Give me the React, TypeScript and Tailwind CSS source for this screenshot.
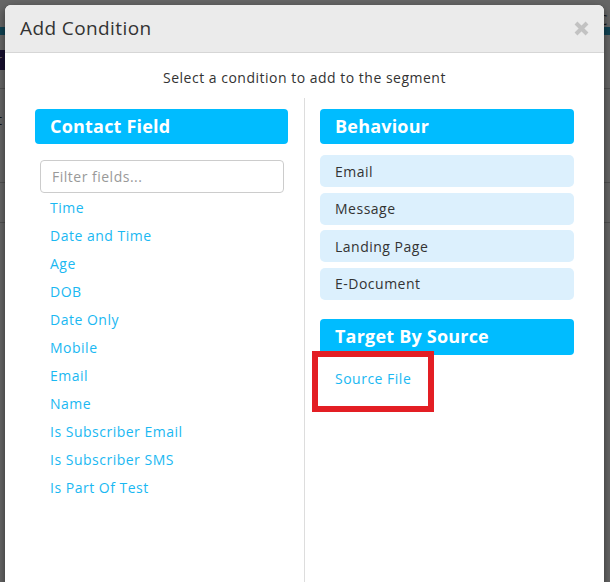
import { useState } from 'react';

const contactFields = [
  'Time',
  'Date and Time',
  'Age',
  'DOB',
  'Date Only',
  'Mobile',
  'Email',
  'Name',
  'Is Subscriber Email',
  'Is Subscriber SMS',
  'Is Part Of Test',
];

const behaviours = ['Email', 'Message', 'Landing Page', 'E-Document'];

function SectionHeader({ title, tall }: { title: string; tall?: boolean }) {
  return (
    <div
      className={`flex ${tall ? 'h-[36px]' : 'h-[35px]'} items-center rounded-[4px] bg-[#00bcff] pl-[15px] text-[18px] font-bold tracking-[0.2px] text-white`}
    >
      {title}
    </div>
  );
}

export default function App() {
  const [filter, setFilter] = useState('');
  const shown = contactFields.filter((f) => f.toLowerCase().includes(filter.toLowerCase()));

  return (
    <div className="relative h-[582px] w-[610px] overflow-hidden bg-white font-['Open_Sans',sans-serif]">
      {/* page behind the modal */}
      <div className="flex h-[27px] items-end justify-end gap-[40px] pr-[2px] text-[15px] leading-[22px] text-[#333]">
        <span className="-mb-[3px]">Home</span>
        <span className="-mb-[3px]">Journeys</span>
        <span className="-mb-[3px] w-[10px] overflow-hidden">C</span>
      </div>
      <div className="h-[8px] bg-[#2aa7cf]" />
      <div className="mt-[15px] flex h-[20px] w-[40px] items-center bg-[#3d2a78] text-[12px] text-white">
        <span className="-ml-[3px]">r</span>
      </div>
      <div className="mt-[18px] border-b border-[#ccc]" />
      <div className="mt-[20px] text-[14px] text-[#333]">
        <span className="-ml-[3px]">t</span>
      </div>
      <div className="mt-[52px] border-b border-[#ccc]" />
      <div className="mt-[39px] border-b border-[#ccc]" />

      {/* overlay */}
      <div className="absolute inset-0 bg-black/60" />

      {/* modal */}
      <div className="absolute left-[5px] top-[5px] h-[620px] w-[599px] overflow-hidden rounded-t-[6px] bg-white shadow-[0_3px_9px_rgba(0,0,0,0.5)]">
        <div className="flex h-[48px] items-center justify-between border-b border-[#d6d6d6] bg-[#ebebeb] pl-[15px] pr-[15px]">
          <h2 className="text-[19px] tracking-[0.4px] text-[#333]">Add Condition</h2>
          <button type="button" className="flex h-[15px] w-[15px] items-center justify-center">
            <svg width="15" height="15" viewBox="0 0 15 15">
              <path d="M2 2 L13 13 M13 2 L2 13" stroke="#c2c2c2" strokeWidth="4" strokeLinecap="butt" />
            </svg>
          </button>
        </div>

        <p className="mt-[15px] text-center text-[14px] leading-[20px] tracking-[0.5px] text-[#333]">
          Select a condition to add to the segment
        </p>

        <div className="mt-[10px] flex px-[30px]">
          <div className="h-[520px] w-[270px] border-r border-[#ddd] pr-[16px] pt-[11px]">
            <SectionHeader title="Contact Field" />
            <input
              value={filter}
              onChange={(e) => setFilter(e.target.value)}
              placeholder="Filter fields..."
              className="mx-[5px] mt-[16px] h-[33px] w-[244px] rounded-[4px] border border-[#ccc] px-[11px] text-[14px] tracking-[0.5px] text-[#333] outline-none placeholder:text-[#999]"
            />
            <ul className="pl-[15px] pt-[1px] text-[14px] leading-[28px] tracking-[0.5px] text-[#1ab8f2]">
              {shown.map((f) => (
                <li key={f}>
                  <a href="#">{f}</a>
                </li>
              ))}
            </ul>
          </div>

          <div className="w-[270px] pl-[15px] pt-[11px]">
            <SectionHeader title="Behaviour" />
            <div className="mt-[11px] flex flex-col gap-[5.5px]">
              {behaviours.map((b) => (
                <div
                  key={b}
                  className="flex h-[32px] items-center rounded-[5px] bg-[#dcf0fd] pl-[15px] text-[14px] tracking-[0.5px] text-[#333]"
                >
                  {b}
                </div>
              ))}
            </div>

            <div className="mt-[19px]">
              <SectionHeader title="Target By Source" tall />
            </div>
            <div className="relative mt-[10px] pl-[15px] text-[14px] leading-[28px] tracking-[0.5px] text-[#1ab8f2]">
              <a href="#">Source File</a>
              <div className="absolute -left-[8px] -top-[14px] h-[61px] w-[122px] border-[6.5px] border-[#e31e24]" />
            </div>
          </div>
        </div>
      </div>
    </div>
  );
}
